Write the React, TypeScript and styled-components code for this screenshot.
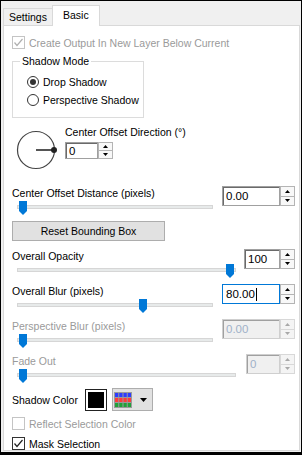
import * as React from 'react';
import styled, { createGlobalStyle, css } from 'styled-components';

const GlobalStyle = createGlobalStyle`
  html, body {
    margin: 0;
    padding: 0;
    background: #fff;
  }
  body {
    font-family: 'Liberation Sans', Arial, sans-serif;
    font-size: 10.5px;
    color: #000;
  }
  * {
    box-sizing: border-box;
  }
`;

const disabledText = '#9a9a9a';

const Window = styled.div`
  width: 302px;
  height: 455px;
  border: 1px solid #000;
  border-bottom-width: 3px;
  background: #f0f0f0;
  padding-left: 2px;
  display: flex;
  flex-direction: column;
`;

const TabStrip = styled.div`
  display: flex;
  align-items: flex-end;
  height: 25px;
`;

const Tab = styled.div<{ $active?: boolean }>`
  height: 17px;
  padding: 0 5px;
  line-height: 16px;
  border: 1px solid #d9d9d9;
  border-bottom: none;
  background: #f0f0f0;

  ${props =>
    props.$active &&
    css`
      position: relative;
      z-index: 1;
      height: 21px;
      margin-bottom: -1px;
      margin-left: -1px;
      padding: 0 10px;
      line-height: 18px;
      background: #fff;
    `}
`;

const Panel = styled.div`
  width: 297px;
  flex: 1;
  margin-bottom: 1px;
  background: #fff;
  border: 1px solid #d9d9d9;
  padding: 10px 4px 0 8px;
  display: flex;
  flex-direction: column;
`;

const CheckRow = styled.div<{ $disabled?: boolean; $top?: number }>`
  display: flex;
  align-items: center;
  gap: 4px;
  height: 13px;
  margin-top: ${props => props.$top || 0}px;
  color: ${props => (props.$disabled ? disabledText : '#000')};
`;

const CheckBox = styled.span<{ $disabled?: boolean }>`
  width: 13px;
  height: 13px;
  border: 1px solid ${props => (props.$disabled ? '#c4c4c4' : '#333')};
  background: #fff;
  display: flex;
  align-items: center;
  justify-content: center;
`;

const GroupBox = styled.fieldset`
  margin: 6px 0 0;
  padding: 0 0 8px 0;
  width: 132px;
  border: 1px solid #dcdcdc;
`;

const GroupTitle = styled.legend`
  margin-left: 7px;
  padding: 0 2px;
  line-height: 13px;
`;

const RadioList = styled.div`
  padding: 5px 0 0 14px;
`;

const RadioRow = styled.div`
  display: flex;
  align-items: center;
  gap: 4px;
  height: 18px;
`;

const RadioCircle = styled.span<{ $checked?: boolean }>`
  width: 12px;
  height: 12px;
  border: 1px solid #333;
  border-radius: 50%;
  background: #fff;
  display: flex;
  align-items: center;
  justify-content: center;

  &::after {
    content: '';
    width: 6px;
    height: 6px;
    border-radius: 50%;
    background: #333;
    display: ${props => (props.$checked ? 'block' : 'none')};
  }
`;

const DirectionRow = styled.div`
  display: flex;
  align-items: flex-start;
  margin-top: 8px;
`;

const Dial = styled.svg`
  margin: 2px 0 0 2px;
  flex: none;
`;

const DirectionControl = styled.div`
  margin-left: 7px;
  display: flex;
  flex-direction: column;
  gap: 3px;
`;

const Label = styled.div<{ $disabled?: boolean }>`
  line-height: 13px;
  white-space: nowrap;
  color: ${props => (props.$disabled ? disabledText : '#000')};
`;

const SpinWrap = styled.div<{ $height: number }>`
  display: flex;
  height: ${props => props.$height}px;
  flex: none;
`;

const SpinField = styled.div<{ $width: number; $focused?: boolean; $disabled?: boolean }>`
  width: ${props => props.$width}px;
  height: 100%;
  border: 1px solid #a0a0a0;
  box-shadow: inset 1px 1px 0 #6a6a6a;
  background: #fff;
  padding: 0 3px;
  display: flex;
  align-items: center;
  font-size: 11.5px;

  ${props =>
    props.$focused &&
    css`
      border-color: #0078d7;
      box-shadow: none;
    `}

  ${props =>
    props.$disabled &&
    css`
      background: #f0f0f0;
      color: #9fb0c8;
      box-shadow: inset 1px 1px 0 #a0a0a0;
      border-color: #cfcfcf;
    `}
`;

const Caret = styled.span`
  width: 1px;
  height: 13px;
  margin-left: 1px;
  background: #000;
`;

const SpinButtons = styled.div`
  width: 15px;
  display: flex;
  flex-direction: column;
`;

const SpinButton = styled.div<{ $disabled?: boolean }>`
  flex: 1;
  border: 1px solid ${props => (props.$disabled ? '#d8d8d8' : '#b4b4b4')};
  background: ${props => (props.$disabled ? '#f4f4f4' : '#f8f8f8')};
  display: flex;
  align-items: center;
  justify-content: center;

  & + & {
    border-top: none;
  }
`;

const SliderRow = styled.div<{ $top: number }>`
  display: flex;
  justify-content: space-between;
  align-items: flex-start;
  height: 29px;
  margin-top: ${props => props.$top}px;
`;

const SliderColumn = styled.div`
  display: flex;
  flex-direction: column;
  padding-top: 1px;
`;

const SliderBox = styled.div<{ $width: number }>`
  position: relative;
  width: ${props => props.$width}px;
  height: 15px;
  margin: 1px 0 0 5px;
  padding-top: 4px;
`;

const Track = styled.div`
  height: 4px;
  background: #e7eaea;
  border: 1px solid #d6d6d6;
`;

const Thumb = styled.svg`
  position: absolute;
  top: 0;
`;

const PushButton = styled.div`
  width: 153px;
  height: 20px;
  margin-top: 6px;
  border: 1px solid #adadad;
  background: #e1e1e1;
  display: flex;
  align-items: center;
  justify-content: center;
`;

const ColorRow = styled.div`
  display: flex;
  align-items: center;
  height: 23px;
  margin-top: 5px;
`;

const ColorLabel = styled.div`
  width: 73px;
`;

const Swatch = styled.div<{ $color: string }>`
  width: 22px;
  height: 22px;
  margin-top: 1px;
  border: 1px solid #222;
  background: ${props => props.$color};
  box-shadow: inset 0 0 0 2px #fff;
`;

const PaletteButton = styled.div`
  width: 41px;
  height: 23px;
  margin-left: 5px;
  border: 1px solid #adadad;
  background: #e1e1e1;
  display: flex;
  align-items: center;
  padding-left: 1px;
  gap: 8px;
`;

const Arrow = ({ up, color = '#000' }: { up?: boolean; color?: string }) => (
  <svg width="7" height="4" viewBox="0 0 7 4">
    <path d={up ? 'M0 4 L3.5 0 L7 4 Z' : 'M0 0 L7 0 L3.5 4 Z'} fill={color} />
  </svg>
);

const SmallArrow = ({ up, color = '#000' }: { up?: boolean; color?: string }) => (
  <svg width="5" height="3" viewBox="0 0 5 3">
    <path d={up ? 'M0 3 L2.5 0 L5 3 Z' : 'M0 0 L5 0 L2.5 3 Z'} fill={color} />
  </svg>
);

const CheckMark = ({ color }: { color: string }) => (
  <svg width="11" height="11" viewBox="0 0 11 11">
    <polyline points="1.5,5.5 4,8.5 9.5,2" fill="none" stroke={color} strokeWidth="1.2" />
  </svg>
);

interface SpinProps {
  value: string;
  width: number;
  height?: number;
  focused?: boolean;
  disabled?: boolean;
}

const SpinBox: React.FC<SpinProps> = ({ value, width, height = 20, focused, disabled }) => (
  <SpinWrap $height={height}>
    <SpinField $width={width} $focused={focused} $disabled={disabled}>
      {value}
      {focused && <Caret />}
    </SpinField>
    <SpinButtons>
      <SpinButton $disabled={disabled}>
        <SmallArrow up color={disabled ? '#a8a8a8' : '#000'} />
      </SpinButton>
      <SpinButton $disabled={disabled}>
        <SmallArrow color={disabled ? '#a8a8a8' : '#000'} />
      </SpinButton>
    </SpinButtons>
  </SpinWrap>
);

interface SliderProps {
  label: string;
  value: string;
  fraction: number;
  trackWidth: number;
  fieldWidth: number;
  top: number;
  focused?: boolean;
  disabled?: boolean;
}

const Slider: React.FC<SliderProps> = ({ label, value, fraction, trackWidth, fieldWidth, top, focused, disabled }) => {
  const left = 2 + fraction * (trackWidth - 12);
  return (
    <SliderRow $top={top}>
      <SliderColumn>
        <Label $disabled={disabled}>{label}</Label>
        <SliderBox $width={trackWidth}>
          <Track />
          <Thumb width="8" height="14" viewBox="0 0 8 14" style={{ left }}>
            <path d="M0 0 H8 V10 L4 14 L0 10 Z" fill="#0078d7" />
          </Thumb>
        </SliderBox>
      </SliderColumn>
      <SpinBox value={value} width={fieldWidth} focused={focused} disabled={disabled} />
    </SliderRow>
  );
};

const paletteRows = ['#2d3cff', '#ff3b3b', '#22a13a'];

const PaletteIcon = () => (
  <svg width="18" height="16" viewBox="0 0 18 16">
    <rect width="18" height="16" fill="#9a9a9a" />
    {paletteRows.map((color, row) =>
      [0, 1, 2, 3].map(col => (
        <rect key={`${row}-${col}`} x={1 + col * 4.25} y={1 + row * 5} width="3.25" height="4" fill={color} />
      )),
    )}
  </svg>
);

const App: React.FC = () => {
  return (
    <>
      <GlobalStyle />
      <Window>
        <TabStrip>
          <Tab>Settings</Tab>
          <Tab $active>Basic</Tab>
        </TabStrip>
        <Panel>
          <CheckRow $disabled>
            <CheckBox $disabled>
              <CheckMark color="#b0b0b0" />
            </CheckBox>
            Create Output In New Layer Below Current
          </CheckRow>

          <GroupBox>
            <GroupTitle>Shadow Mode</GroupTitle>
            <RadioList>
              <RadioRow>
                <RadioCircle $checked />
                Drop Shadow
              </RadioRow>
              <RadioRow>
                <RadioCircle />
                Perspective Shadow
              </RadioRow>
            </RadioList>
          </GroupBox>

          <DirectionRow>
            <Dial width="44" height="44" viewBox="0 0 44 44">
              <circle cx="22" cy="22" r="18.5" fill="none" stroke="#444" strokeWidth="1.2" />
              <line x1="22" y1="22" x2="40" y2="22" stroke="#555" strokeWidth="2" />
              <circle cx="40" cy="22" r="3" fill="#222" />
            </Dial>
            <DirectionControl>
              <Label>Center Offset Direction (°)</Label>
              <SpinBox value="0" width={33} height={17} />
            </DirectionControl>
          </DirectionRow>

          <Slider label="Center Offset Distance (pixels)" value="0.00" fraction={0} trackWidth={196} fieldWidth={58} top={14} />

          <PushButton>Reset Bounding Box</PushButton>

          <Slider label="Overall Opacity" value="100" fraction={1} trackWidth={219} fieldWidth={36} top={8} />
          <Slider label="Overall Blur (pixels)" value="80.00" fraction={0.65} trackWidth={196} fieldWidth={58} top={6} focused />
          <Slider label="Perspective Blur (pixels)" value="0.00" fraction={0} trackWidth={196} fieldWidth={58} top={6} disabled />
          <Slider label="Fade Out" value="0" fraction={0} trackWidth={219} fieldWidth={34} top={6} disabled />

          <ColorRow>
            <ColorLabel>Shadow Color</ColorLabel>
            <Swatch $color="#000" />
            <PaletteButton>
              <PaletteIcon />
              <Arrow />
            </PaletteButton>
          </ColorRow>

          <CheckRow $disabled $top={6}>
            <CheckBox $disabled />
            Reflect Selection Color
          </CheckRow>
          <CheckRow $top={7}>
            <CheckBox>
              <CheckMark color="#222" />
            </CheckBox>
            Mask Selection
          </CheckRow>
        </Panel>
      </Window>
    </>
  );
};

export default App;
